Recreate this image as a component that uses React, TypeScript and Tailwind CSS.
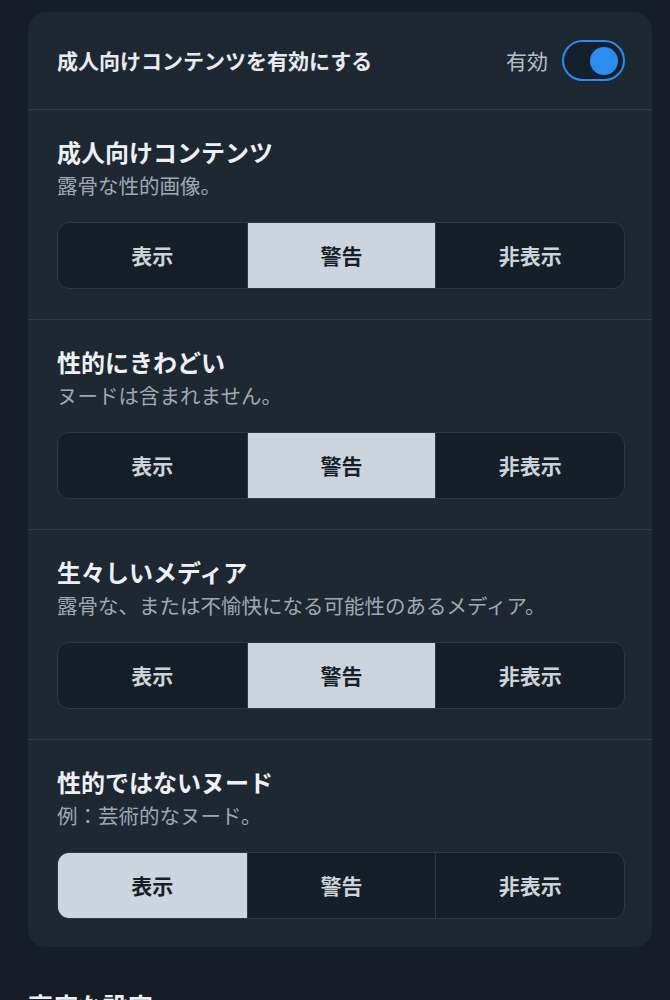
const sections = [
  { title: "成人向けコンテンツ", desc: "露骨な性的画像。", selected: 1 },
  { title: "性的にきわどい", desc: "ヌードは含まれません。", selected: 1 },
  { title: "生々しいメディア", desc: "露骨な、または不愉快になる可能性のあるメディア。", selected: 1 },
  { title: "性的ではないヌード", desc: "例：芸術的なヌード。", selected: 0 },
];

const options = ["表示", "警告", "非表示"];

function Segmented({ selected }: { selected: number }) {
  return (
    <div className="mt-[22px] grid h-[67px] grid-cols-3 overflow-hidden rounded-[12px] border border-[#2c3845] bg-[#161e27]">
      {options.map((o, i) => (
        <div
          key={o}
          className={`flex items-center justify-center text-[21px] font-semibold ${
            i > 0 ? "border-l border-[#2c3845]" : ""
          } ${i === selected ? "bg-[#ccd4dd] text-[#161e27]" : "text-[#cdd3da]"}`}
        >
          {o}
        </div>
      ))}
    </div>
  );
}

export default function App() {
  return (
    <div
      className="min-h-[1000px] bg-[#161d26] pl-[28px] pr-[18px] pt-[12px]"
      style={{ fontFamily: '"Noto Sans CJK JP", "Noto Sans", sans-serif' }}
    >
      <div className="rounded-[18px] bg-[#1e2833] pb-[28px]">
        <div className="flex h-[98px] items-center justify-between border-b border-[#2f3b48] pl-[29px] pr-[27px]">
          <span className="text-[21px] font-semibold text-[#e8ecf0]">成人向けコンテンツを有効にする</span>
          <div className="flex items-center gap-[14px]">
            <span className="text-[21px] text-[#b8c0c8]">有効</span>
            <div className="flex h-[41px] w-[63px] items-center justify-end rounded-full border-2 border-[#2b8cf2] bg-[#15202c] pr-[5px]">
              <div className="h-[28px] w-[28px] rounded-full bg-[#2b8cf2]" />
            </div>
          </div>
        </div>
        {sections.map((s, i) => (
          <div
            key={s.title}
            className={`pl-[29px] pr-[27px] pt-[25px] ${i < sections.length - 1 ? "border-b border-[#2f3b48] pb-[30px]" : ""}`}
          >
            <div className="text-[24px] font-bold leading-[34px] text-[#eef1f4]">{s.title}</div>
            <div className="mt-[1px] text-[20.5px] leading-[30px] text-[#a0a9b3]">{s.desc}</div>
            <Segmented selected={s.selected} />
          </div>
        ))}
      </div>
      <div className="mt-[40px] text-[25px] font-bold text-[#eef1f4]">高度な設定</div>
    </div>
  );
}
